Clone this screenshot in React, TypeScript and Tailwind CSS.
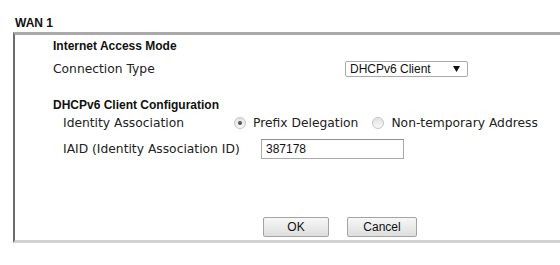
const arial = "font-['Liberation_Sans',Arial,sans-serif]";
const tahoma = "font-['DejaVu_Sans',Verdana,sans-serif]";

function Radio({ checked }: { checked?: boolean }) {
    return (
        <span className="w-[12px] h-[12px] rounded-full border border-[#c4c4c4] bg-gradient-to-b from-[#e2e2e2] to-[#f8f8f8] flex items-center justify-center shrink-0">
            {checked && <span className="w-[4px] h-[4px] rounded-full bg-[#555]"/>}
        </span>
    );
}

export default function App() {
    return (
        <div className="w-[560px] h-[265px] bg-white overflow-hidden">
            <div className={`${arial} font-bold text-[12px] leading-[14px] text-[#111] pl-[15px] pt-[16px] h-[32px]`}>WAN 1</div>

            <div className="ml-[13px] w-[600px] h-[211px] border-t-[3px] border-t-[#a9a9a9] border-l-2 border-l-[#6d6d6d] border-b-[3px] border-b-[#d2d2d2] pl-[38px] flex flex-col text-[#111]">
                <div className={`${arial} font-bold text-[12px] h-[22px] flex items-center`}>Internet Access Mode</div>

                <div className="h-[24px] flex items-center">
                    <span className={`${tahoma} text-[12.3px] text-[#222] w-[292px]`}>Connection Type</span>
                    <div className={`${arial} text-[12px] w-[123px] h-[16px] border border-[#a9a9a9] rounded-[2px] bg-white flex items-center justify-between pl-[4px] pr-[7px]`}>
                        <span>DHCPv6 Client</span>
                        <svg width="7" height="6" viewBox="0 0 7 6"><path d="M0 0h7L3.5 6z" fill="#111"/></svg>
                    </div>
                </div>

                <div className={`${arial} font-bold text-[12px] h-[20px] mt-[14px] flex items-center`}>DHCPv6 Client Configuration</div>

                <div className={`${tahoma} text-[12.3px] text-[#222] h-[16px] flex items-center pl-[10px]`}>
                    <span className="w-[171px]">Identity Association</span>
                    <Radio checked/>
                    <span className="ml-[7px]">Prefix Delegation</span>
                    <span className="ml-[14px]"><Radio/></span>
                    <span className="ml-[7px]">Non-temporary Address</span>
                </div>

                <div className={`${tahoma} text-[12.3px] text-[#222] h-[22px] mt-[7px] flex items-center pl-[10px]`}>
                    <span className="w-[198px]">IAID (Identity Association ID)</span>
                    <div className={`${arial} text-[12px] text-[#111] w-[143px] h-[20px] border border-[#a9a9a9] border-t-[#8f8f8f] bg-white flex items-center pl-[4px]`}>387178</div>
                </div>

                <div className={`${arial} text-[12px] flex gap-[18px] mt-[57px] ml-[210px]`}>
                    <button className="w-[66px] h-[20px] border border-[#a3a3a3] rounded-[2px] bg-gradient-to-b from-[#f7f7f7] to-[#dedede]">OK</button>
                    <button className="w-[70px] h-[20px] border border-[#a3a3a3] rounded-[2px] bg-gradient-to-b from-[#f7f7f7] to-[#dedede]">Cancel</button>
                </div>
            </div>
        </div>
    );
}
